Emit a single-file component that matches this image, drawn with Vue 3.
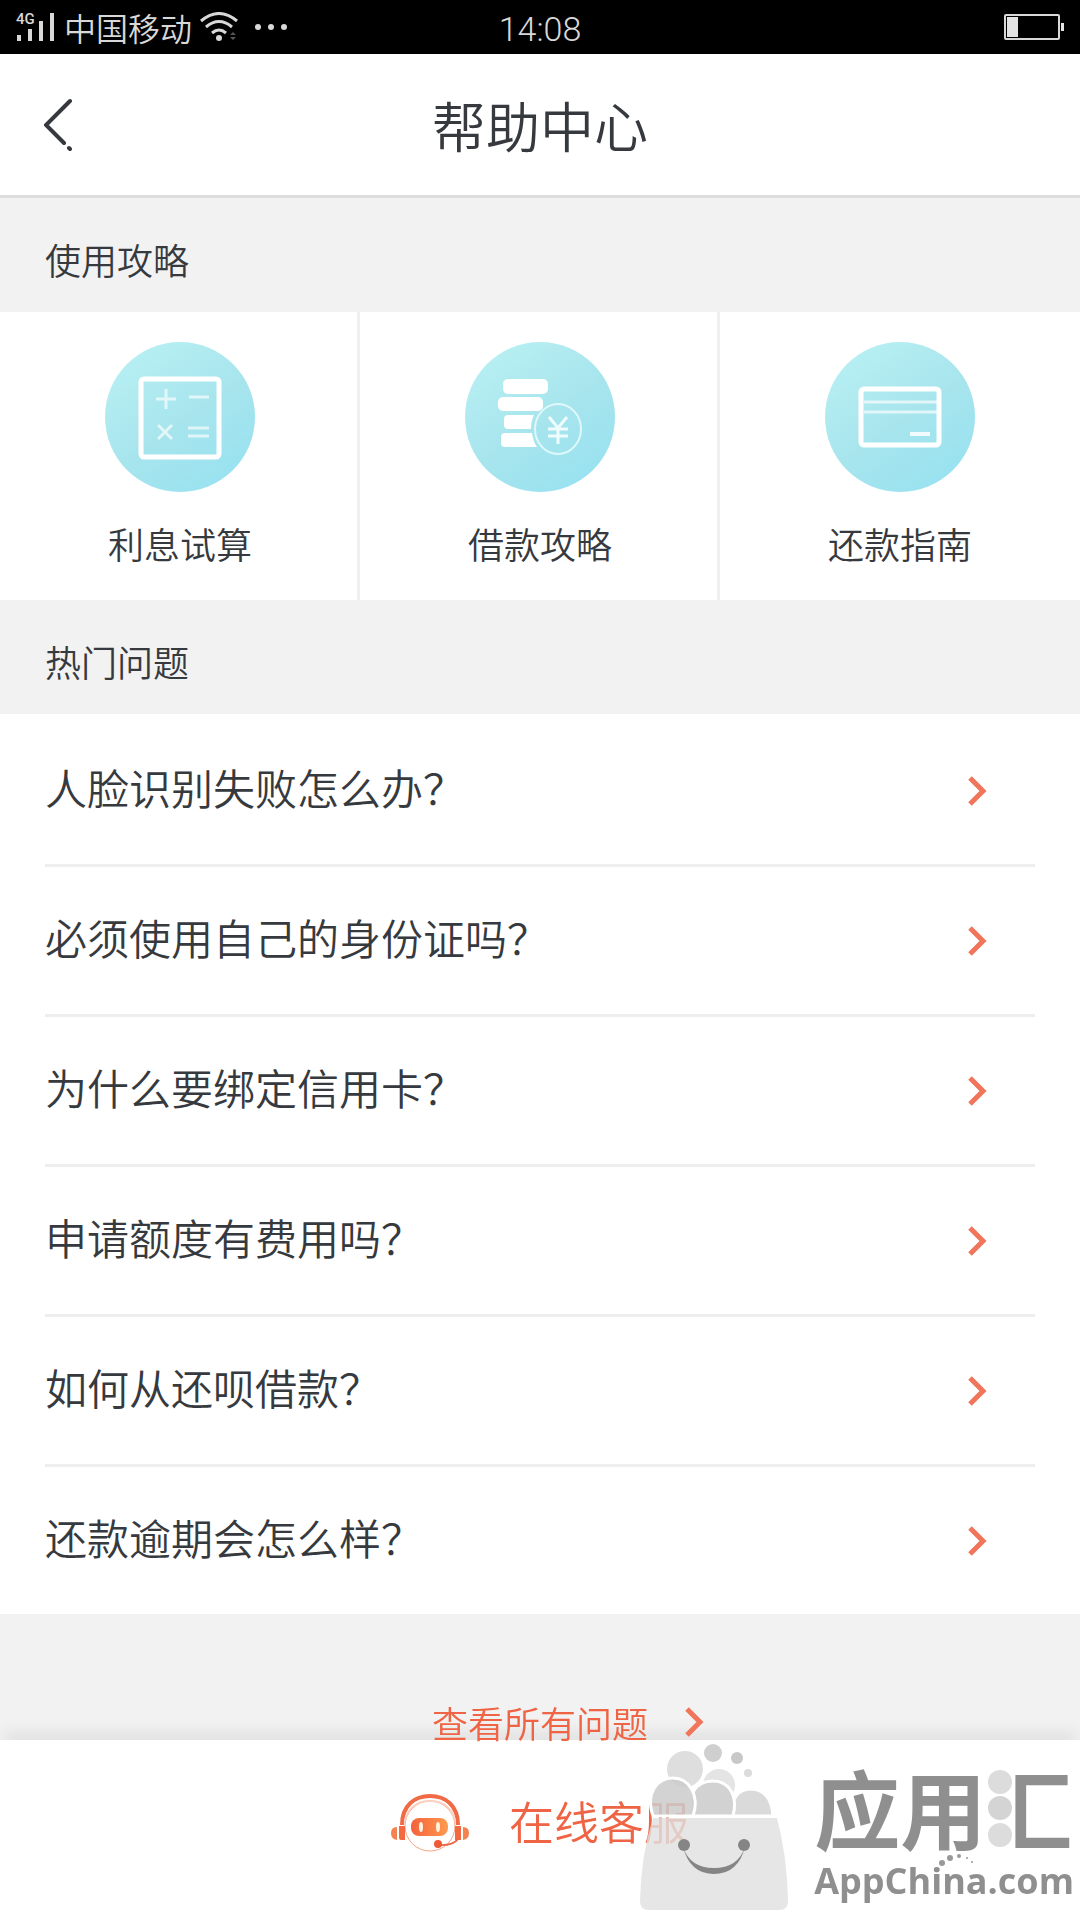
<script setup>
const guides = [
  { id: 'calc', label: '利息试算' },
  { id: 'loan', label: '借款攻略' },
  { id: 'card', label: '还款指南' },
]

const questions = [
  '人脸识别失败怎么办？',
  '必须使用自己的身份证吗？',
  '为什么要绑定信用卡？',
  '申请额度有费用吗？',
  '如何从还呗借款？',
  '还款逾期会怎么样？',
]
</script>

<template>
  <div class="page">
    <div class="status-bar">
      <div class="status-left">
        <svg class="signal" width="40" height="30" viewBox="0 0 40 30">
          <text x="0" y="12" class="signal-text">4G</text>
          <path d="M1 23h4v6h-4zM12 17h4v12h-4zM23 9h4v20h-4zM34 1h4v28h-4z" fill="#d8d8d8" />
        </svg>
        <span class="carrier">中国移动</span>
        <svg width="38" height="30" viewBox="0 0 38 30" fill="none" stroke="#d8d8d8" stroke-width="3">
          <path d="M1 9Q19 -6 37 9M6 15Q19 4 32 15M12 21Q19 15 26 21" />
          <circle cx="19" cy="26" r="3" fill="#d8d8d8" stroke="none" />
          <path d="M30 23l3-3 3 3zM30 25l3 3 3-3z" fill="#555" stroke="none" />
        </svg>
        <svg class="more" width="34" height="8" viewBox="0 0 34 8" fill="#d8d8d8">
          <circle cx="4" cy="4" r="3" /><circle cx="17" cy="4" r="3" /><circle cx="30" cy="4" r="3" />
        </svg>
      </div>
      <span class="clock">14:08</span>
      <svg class="battery" width="60" height="26" viewBox="0 0 60 26">
        <rect x="1" y="1" width="54" height="24" rx="1" fill="none" stroke="#d8d8d8" stroke-width="2" />
        <path d="M3 3h11v20h-11zM57 9h3v8h-3z" fill="#e4e4e4" />
      </svg>
    </div>

    <header class="nav">
      <button class="back" aria-label="返回">
        <svg width="30" height="54" viewBox="0 0 30 54" fill="none" stroke="#363a3e" stroke-width="4" stroke-linecap="round">
          <path d="M26 3L2 27L20 45M25 50l1 1" />
        </svg>
      </button>
      <h1>帮助中心</h1>
      <span />
    </header>

    <h2 class="section-title">使用攻略</h2>
    <nav class="guides">
      <a v-for="g in guides" :key="g.id" href="#" class="guide">
        <span class="guide-icon">
          <svg v-if="g.id === 'calc'" width="150" height="150" viewBox="0 0 150 150" fill="none" stroke="#fff">
            <rect x="36" y="37" width="78" height="78" rx="3" stroke-width="5" />
            <path d="M51 57h20M61 47v20M84 55h20M53 83l14 14M67 83l-14 14M83 86h21M83 94h21" stroke-width="3" opacity=".65" />
          </svg>
          <svg v-else-if="g.id === 'loan'" width="150" height="150" viewBox="0 0 150 150">
            <g fill="#fff">
              <rect x="38" y="37" width="45" height="15" rx="5" />
              <rect x="33" y="55" width="45" height="14" rx="5" />
              <path d="M43 73h26q-3 6-3 14h-23q-4 0-4-4v-6q0-4 4-4zM40 91h27q1 8 5 14h-32q-4 0-4-4v-6q0-4 4-4z" />
            </g>
            <ellipse cx="93" cy="87" rx="23" ry="25" fill="none" stroke="#dff8fb" stroke-width="2" />
            <path d="M84 75l9 11 9-11M93 86v16M83 87h20M83 94h20" fill="none" stroke="#effcfd" stroke-width="3" />
          </svg>
          <svg v-else width="150" height="150" viewBox="0 0 150 150" fill="none" stroke="#fff">
            <rect x="36" y="47" width="78" height="56" rx="3" stroke-width="5" />
            <path d="M39 60h73M39 70h73" stroke-width="3" opacity=".65" />
            <path d="M85 92h20" stroke-width="4" opacity=".85" />
          </svg>
        </span>
        <span>{{ g.label }}</span>
      </a>
    </nav>

    <h2 class="section-title">热门问题</h2>
    <ul class="questions">
      <li v-for="q in questions" :key="q">
        <a href="#" class="question">
          <span class="question-text">{{ q }}</span>
          <svg class="arrow" width="20" height="32" viewBox="0 0 20 32"><path d="M3 3L16 16L3 29" /></svg>
        </a>
      </li>
    </ul>

    <div class="all">
      <a href="#" class="all-link">
        <span>查看所有问题</span>
        <svg class="arrow" width="20" height="32" viewBox="0 0 20 32"><path d="M3 3L16 16L3 29" /></svg>
      </a>
    </div>

    <footer class="service">
      <button class="service-btn">
        <svg width="78" height="62" viewBox="0 0 78 62" fill="none">
          <defs>
            <linearGradient id="face" x1="0" x2="1">
              <stop offset="0" stop-color="#f4623c" />
              <stop offset="1" stop-color="#ff9a4e" />
            </linearGradient>
          </defs>
          <circle cx="39" cy="33" r="25" stroke="#f7a488" stroke-width="1" />
          <path d="M11 32C11 12 24 3 39 3S67 12 67 32" stroke="#f06a45" stroke-width="4" />
          <path d="M14 28C17 14 27 8 39 8S61 14 64 28" stroke="#fbd0c0" stroke-width="2" />
          <path d="M8 33h6v14h-4q-2 0-2-3zM64 33h6v14h-6z" fill="#f4693f" />
          <path d="M6 34v13q-6-1-6-7t6-6zM72 34v13q6-1 6-7t-6-6z" fill="#f4814f" />
          <path d="M67 46Q62 53 47 52" stroke="#ee6444" stroke-width="2" />
          <circle cx="47" cy="51" r="4" fill="#ee5a36" />
          <rect x="20" y="25" width="37" height="18" rx="8" fill="url(#face)" />
          <ellipse cx="30" cy="34" rx="2" ry="5" fill="#fff2df" />
          <ellipse cx="47" cy="34" rx="2" ry="5" fill="#fff2df" />
        </svg>
        <span class="service-text">在线客服</span>
      </button>
    </footer>

    <div class="watermark">
      <svg width="150" height="168" viewBox="0 0 150 168">
        <g fill="#dedede">
          <circle cx="45" cy="26" r="18" />
          <circle cx="73" cy="10" r="9" fill="#cfcfcf" />
          <circle cx="97" cy="15" r="6" fill="#c8c8c8" />
          <circle cx="108" cy="30" r="4" fill="#dcdcdc" />
          <circle cx="79" cy="42" r="16" fill="#e4e4e4" />
        </g>
        <g stroke="#fff" stroke-width="3">
          <path d="M92 73C91 55 98 46 111 46S132 56 133 73z" fill="#dadada" />
          <path d="M52 73C46 52 56 38 73 38S98 54 93 73z" fill="#d2d2d2" />
          <path d="M13 73C5 50 17 35 33 35S60 52 53 73z" fill="#cbcbcb" fill-opacity=".85" />
        </g>
        <path d="M13 75H137Q147 112 148 158Q148 167 139 167H9Q0 167 0 158Q1 112 13 75z" fill="#e0e0e0" fill-opacity=".82" />
        <circle cx="44" cy="102" r="6" fill="#858585" />
        <circle cx="104" cy="102" r="6" fill="#858585" />
        <path d="M43 104Q50 125 74 125T105 104Q98 131 74 131T43 104z" fill="#858585" />
      </svg>
      <div class="brand">
        <div class="brand-name">
          <span>应用</span><span class="brand-last">汇</span>
          <svg class="brand-dots" width="26" height="80" viewBox="0 0 26 80">
            <circle cx="13" cy="13" r="12" fill="#dcdcdc" />
            <circle cx="13" cy="39" r="12" fill="#d4d4d4" />
            <circle cx="13" cy="66" r="12" fill="#dcdcdc" />
          </svg>
        </div>
        <div class="brand-url">AppChina.com</div>
        <svg class="brand-arc" width="36" height="14" viewBox="0 0 36 14" fill="#999">
          <circle cx="4" cy="10" r="3" /><circle cx="12" cy="5" r="3" /><circle cx="21" cy="3" r="2" />
          <circle cx="29" cy="5" r="1" /><circle cx="34" cy="9" r="1" />
        </svg>
      </div>
    </div>
  </div>
</template>

<style>
body {
  background: #f2f2f2;
}
</style>

<style scoped>
.page {
  min-height: 100vh;
  box-sizing: border-box;
  padding-bottom: 176px;
  background: #f2f2f2;
  color: #363a3e;
  font-family: "Noto Sans CJK SC", sans-serif;
  font-weight: 350;
}
a {
  color: inherit;
  text-decoration: none;
}
button {
  padding: 0;
  border: 0;
  background: none;
  color: inherit;
  font: inherit;
}
svg {
  display: block;
  flex: none;
}

.status-bar {
  display: grid;
  grid-template-columns: 1fr auto 1fr;
  align-items: center;
  height: 54px;
  padding: 0 16px;
  background: #000;
  color: #d8d8d8;
}
.status-left {
  display: flex;
  align-items: center;
}
.signal {
  overflow: visible;
}
.signal-text {
  fill: #d8d8d8;
  font: 500 15px Roboto, sans-serif;
}
.carrier {
  margin: 0 8px;
  font-size: 32px;
  line-height: 54px;
}
.more {
  margin-left: 16px;
}
.clock {
  padding-top: 4px;
  font-family: Roboto, sans-serif;
  font-size: 34px;
  font-weight: 300;
  line-height: 40px;
}
.battery {
  justify-self: end;
}

.nav {
  display: grid;
  grid-template-columns: 1fr auto 1fr;
  align-items: center;
  height: 141px;
  padding: 0 44px;
  background: #fff;
  border-bottom: 3px solid #dcdcdc;
}
.back {
  justify-self: start;
}
.nav h1 {
  margin: 0;
  font-size: 54px;
  font-weight: inherit;
  line-height: 80px;
}

.section-title {
  margin: 0;
  padding: 34px 45px 26px;
  font-size: 36px;
  font-weight: inherit;
  line-height: 54px;
}

.guides {
  display: grid;
  grid-template-columns: repeat(3, 1fr);
  background: #fff;
}
.guide {
  display: flex;
  flex-direction: column;
  align-items: center;
  gap: 24px;
  padding: 30px 0;
  box-shadow: inset -3px 0 #f0f0f0;
  font-size: 36px;
  line-height: 54px;
}
.guide:last-child {
  box-shadow: none;
}
.guide-icon {
  border-radius: 50%;
  background: linear-gradient(145deg, #b8f0f3 10%, #a8e5ed 50%, #98e2f0 90%);
}

.questions {
  margin: 0;
  padding: 3px 45px 0;
  list-style: none;
  background: #fff;
}
.question {
  display: flex;
  align-items: center;
  justify-content: space-between;
  height: 147px;
  padding-right: 48px;
  border-bottom: 3px solid #eee;
  font-size: 42px;
}
.question-text {
  padding-bottom: 8px;
}
li:last-child .question {
  border-bottom: 0;
}
.arrow {
  fill: none;
  stroke: #f0755a;
  stroke-width: 5;
}

.all {
  position: relative;
  z-index: 1;
  padding-top: 81px;
}
.all-link {
  display: flex;
  align-items: center;
  justify-content: center;
  gap: 36px;
  padding-left: 56px;
  color: #ee6444;
  font-size: 36px;
  line-height: 54px;
}

.service {
  position: fixed;
  right: 0;
  bottom: 0;
  left: 0;
  display: flex;
  justify-content: center;
  height: 180px;
  background: #fff;
  box-shadow: 0 -14px 12px -4px #e4e4e4;
}
.service-btn {
  display: flex;
  align-items: center;
  gap: 40px;
  padding-bottom: 12px;
  color: #ee6444;
  font-size: 45px;
}
.service-text {
  padding-bottom: 8px;
}

.watermark {
  position: fixed;
  right: 6px;
  bottom: 9px;
  z-index: 2;
  display: flex;
  gap: 24px;
  color: #8f8f8f;
  pointer-events: none;
}
.brand {
  position: relative;
  padding-top: 12px;
}
.brand-name {
  position: relative;
  font-size: 86px;
  font-weight: 700;
  line-height: 104px;
}
.brand-last {
  background: linear-gradient(90deg, transparent 34%, #8f8f8f 34%);
  background-clip: text;
  color: transparent;
}
.brand-dots {
  position: absolute;
  top: 14px;
  left: 173px;
}
.brand-url {
  font-family: "Open Sans", sans-serif;
  font-size: 36px;
  font-weight: 700;
  line-height: 44px;
}
.brand-arc {
  position: absolute;
  top: 110px;
  left: 124px;
}
</style>
